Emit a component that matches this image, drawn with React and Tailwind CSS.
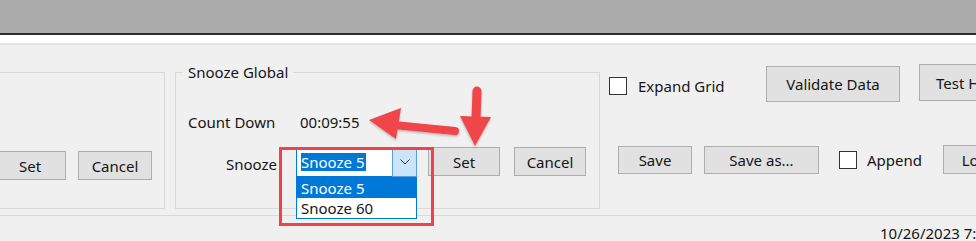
export default function App() {
  const btn =
    "flex items-center justify-center bg-[#e1e1e1] border border-[#adadad] shrink-0 whitespace-nowrap";
  return (
    <div className="relative w-[976px] h-[241px] overflow-hidden bg-[#f0f0f0] text-[15px] leading-[20px] text-[#151515] font-['Noto_Sans',sans-serif]">
      {/* top window strip */}
      <div className="h-[33px] bg-[#ababab]" />
      <div className="h-[2px] bg-[#2d2d2d]" />
      <div className="h-[8px] bg-white" />
      <div className="h-[2px] bg-[#e3e3e3]" />

      {/* main row */}
      <div className="flex items-start mt-[17px] h-[147px]">
        {/* left partial group */}
        <fieldset className="-ml-[20px] mt-[10px] w-[185px] h-[137px] border border-[#d9d9d9] shrink-0">
          <div className="flex mt-[78px] ml-[13px]">
            <button className={`${btn} w-[72px] h-[29px]`}>Set</button>
            <button className={`${btn} ml-[12px] w-[74px] h-[29px]`}>Cancel</button>
          </div>
        </fieldset>

        {/* Snooze Global */}
        <fieldset className="ml-[10px] w-[425px] h-[147px] border border-[#d9d9d9] shrink-0">
          <legend className="ml-[7px] px-[5px]">Snooze Global</legend>
          <div className="pl-[12px]">
            <div className="flex mt-[30px]">
              <span className="w-[112px]">Count Down</span>
              <span>00:09:55</span>
            </div>
            <div className="flex items-start mt-[15px]">
              <span className="w-[89px] text-right mt-[7px]">Snooze</span>
              <div className="relative ml-[19px] w-[121px] h-[30px] border border-[#0078d7] bg-white flex shrink-0">
                <div className="flex-1 flex items-center pl-[4px]">
                  <span className="bg-[#0078d7] text-white leading-[18px] pr-[1px]">Snooze 5</span>
                </div>
                <div className="w-[25px] -my-px -mr-px bg-[#cce4f7] border border-[#569de5] flex items-center justify-center">
                  <svg width="10" height="6" viewBox="0 0 10 6">
                    <polyline points="0.5,0.5 5,5 9.5,0.5" fill="none" stroke="#333" strokeWidth="1" />
                  </svg>
                </div>
                <div className="absolute left-[-1px] top-[29px] w-[121px] h-[42px] border border-[#0078d7] bg-white flex flex-col">
                  <div className="h-[20px] bg-[#0078d7] text-white pl-[4px] flex items-center">Snooze 5</div>
                  <div className="h-[20px] pl-[4px] flex items-center">Snooze 60</div>
                </div>
              </div>
              <button className={`${btn} ml-[11px] w-[72px] h-[29px]`}>Set</button>
              <button className={`${btn} ml-[14px] w-[72px] h-[29px]`}>Cancel</button>
            </div>
          </div>
        </fieldset>

        {/* right controls */}
        <div className="ml-[9px] mt-[2px] shrink-0 flex flex-col">
          <div className="flex items-start">
            <div className="w-[157px] mt-[12px] flex items-center shrink-0">
              <span className="w-[18px] h-[18px] bg-white border border-[#333] shrink-0" />
              <span className="ml-[11px] whitespace-nowrap">Expand Grid</span>
            </div>
            <button className={`${btn} mt-[2px] w-[134px] h-[36px]`}>Validate Data</button>
            <button className={`${btn} ml-[19px] w-[124px] h-[37px]`}>Test Harness</button>
          </div>
          <div className="flex items-start mt-[43px]">
            <button className={`${btn} ml-[9px] mt-[1px] w-[74px] h-[28px]`}>Save</button>
            <button className={`${btn} ml-[12px] mt-[1px] w-[115px] h-[28px]`}>Save as...</button>
            <div className="ml-[20px] w-[104px] mt-[5px] flex items-center shrink-0">
              <span className="w-[18px] h-[18px] bg-white border border-[#333] shrink-0" />
              <span className="ml-[10px]">Append</span>
            </div>
            <button className={`${btn} w-[72px] h-[29px]`}>Load</button>
          </div>
        </div>
      </div>

      {/* status bar */}
      <div className="mt-[6px] h-px bg-[#d9d9d9]" />
      <div className="pl-[880px] pt-[7px] whitespace-nowrap">10/26/2023 7:41:08 PM</div>

      {/* annotations */}
      <div className="absolute left-[279px] top-[147px] w-[155px] h-[79px] border-[3px] border-[#ee4349] pointer-events-none" />
      <svg className="absolute left-0 top-0 pointer-events-none" width="976" height="241" viewBox="0 0 976 241">
        <defs>
          <filter id="sh" x="-20%" y="-20%" width="140%" height="140%">
            <feDropShadow dx="0" dy="1.5" stdDeviation="1.2" floodColor="#000" floodOpacity="0.25" />
          </filter>
        </defs>
        <g filter="url(#sh)" fill="#f0444a" stroke="#f0444a">
          <line x1="455" y1="131" x2="394" y2="125" strokeWidth="8" strokeLinecap="round" />
          <polygon points="369,120 401,108 396,139" stroke="none" />
          <line x1="477" y1="91" x2="476" y2="119" strokeWidth="9" strokeLinecap="round" />
          <polygon points="460,116 491,117 475,146" stroke="none" />
        </g>
      </svg>
    </div>
  );
}
